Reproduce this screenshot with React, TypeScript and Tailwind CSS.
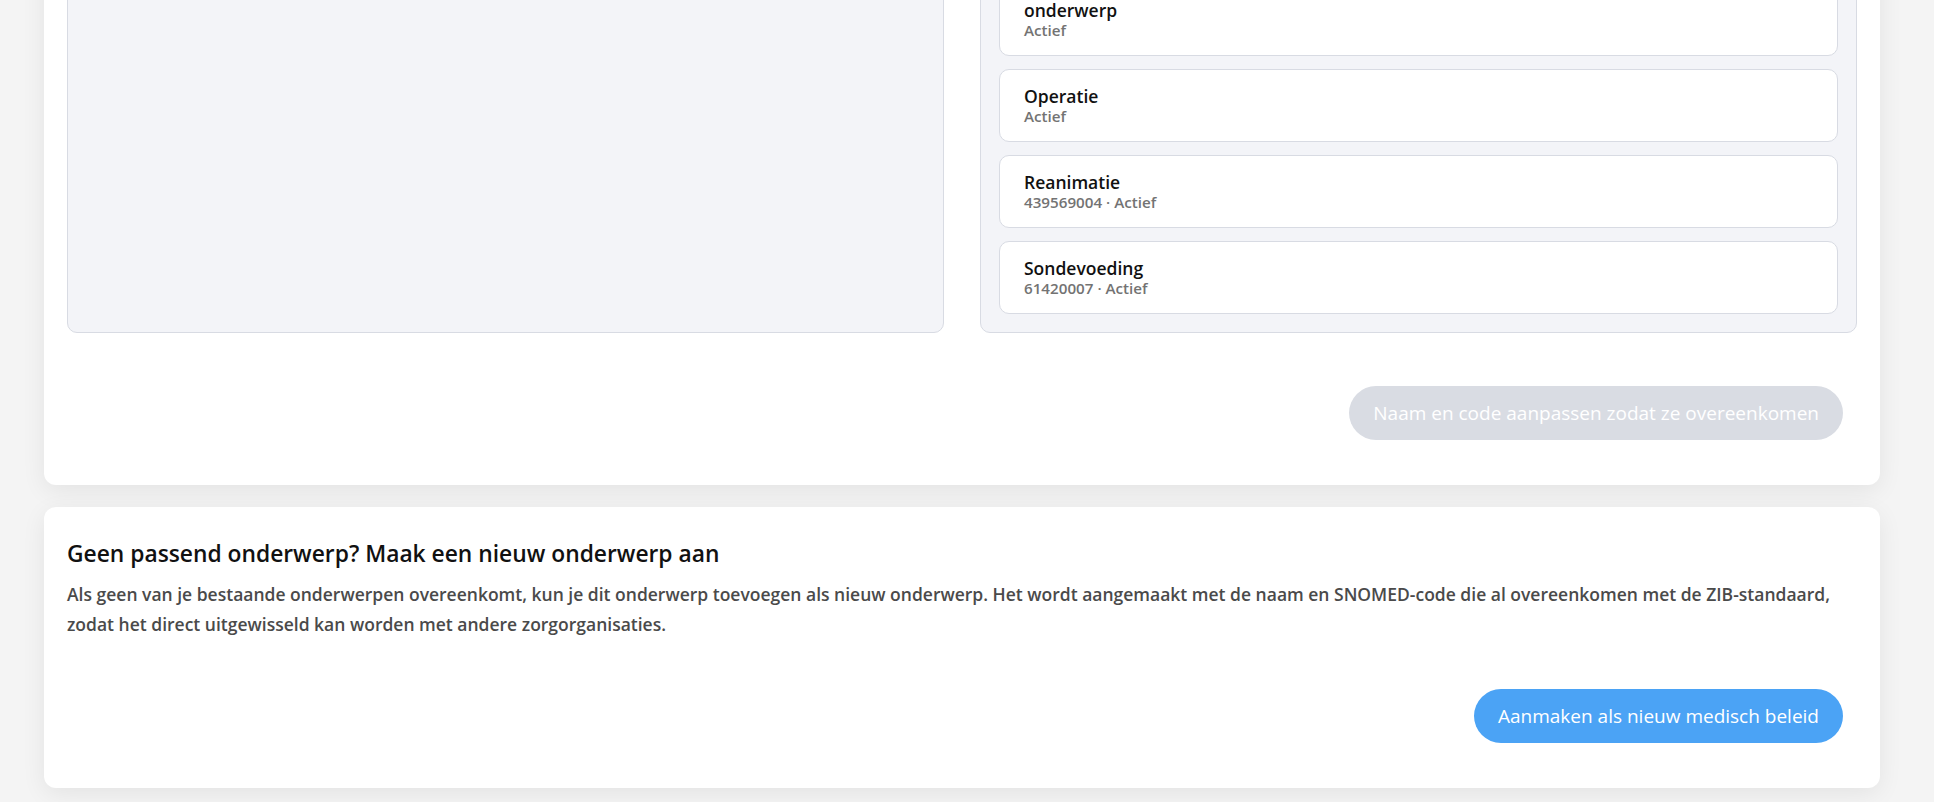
import React from "react";

type Topic = { title: React.ReactNode; code?: string; status: string };

const topics: Topic[] = [
  { title: "Behandelbeperking", code: "1", status: "Actief" },
  {
    title: (
      <>
        Eigen
        <br />
        onderwerp
      </>
    ),
    status: "Actief",
  },
  { title: "Operatie", status: "Actief" },
  { title: "Reanimatie", code: "439569004", status: "Actief" },
  { title: "Sondevoeding", code: "61420007", status: "Actief" },
];

function TopicItem({ topic }: { topic: Topic }) {
  return (
    <div className="rounded-[10px] border border-[#d8dbe3] bg-white px-6 py-[15px]">
      <div className="text-[17.5px] font-semibold leading-[22px] text-[#111111]">
        {topic.title}
      </div>
      <div className="text-[15.2px] font-semibold leading-[19px] text-[#737373]">
        {topic.code ? `${topic.code} · ${topic.status}` : topic.status}
      </div>
    </div>
  );
}

export default function App() {
  return (
    <div
      className="flex h-[802px] w-full flex-col justify-end gap-[22px] overflow-hidden bg-[#f4f4f4] pb-[14px] pl-[44px] pr-[54px]"
      style={{ fontFamily: '"Open Sans", "Noto Sans", sans-serif' }}
    >
      {/* Matching card: existing topics next to the incoming one */}
      <section className="shrink-0 rounded-[12px] bg-white px-[23px] pb-[45px] pt-6 shadow-[0_6px_24px_rgba(0,0,0,0.07)]">
        <div className="grid grid-cols-2 gap-[36px]">
          <div className="h-[520px] rounded-[10px] border border-[#d8dbe3] bg-[#f3f4f8]" />
          <div className="flex flex-col justify-end gap-[13px] rounded-[10px] border border-[#d8dbe3] bg-[#f3f4f8] p-[18px]">
            {topics.map((t, i) => (
              <TopicItem key={i} topic={t} />
            ))}
          </div>
        </div>
        <div className="mt-[53px] flex justify-end pr-[14px]">
          <button
            type="button"
            disabled
            className="h-[54px] rounded-full bg-[#d9dce3] px-[24px] text-[19px] font-medium text-white"
          >
            Naam en code aanpassen zodat ze overeenkomen
          </button>
        </div>
      </section>

      {/* New topic card */}
      <section className="shrink-0 rounded-[12px] bg-white px-[23px] pb-[45px] pt-[32px] shadow-[0_6px_24px_rgba(0,0,0,0.07)]">
        <h2 className="text-[22.8px] font-semibold leading-[30px] text-[#111111]">
          Geen passend onderwerp? Maak een nieuw onderwerp aan
        </h2>
        <p className="mt-[10px] text-[17.5px] font-semibold leading-[30px] text-[#4a4a4a]">
          Als geen van je bestaande onderwerpen overeenkomt, kun je dit onderwerp toevoegen als nieuw
          onderwerp. Het wordt aangemaakt met de naam en SNOMED-code die al overeenkomen met de
          ZIB-standaard, zodat het direct uitgewisseld kan worden met andere zorgorganisaties.
        </p>
        <div className="mt-[50px] flex justify-end pr-[14px]">
          <button
            type="button"
            className="h-[54px] rounded-full bg-[#4ba3f5] px-[24px] text-[19px] font-medium text-white"
          >
            Aanmaken als nieuw medisch beleid
          </button>
        </div>
      </section>
    </div>
  );
}
